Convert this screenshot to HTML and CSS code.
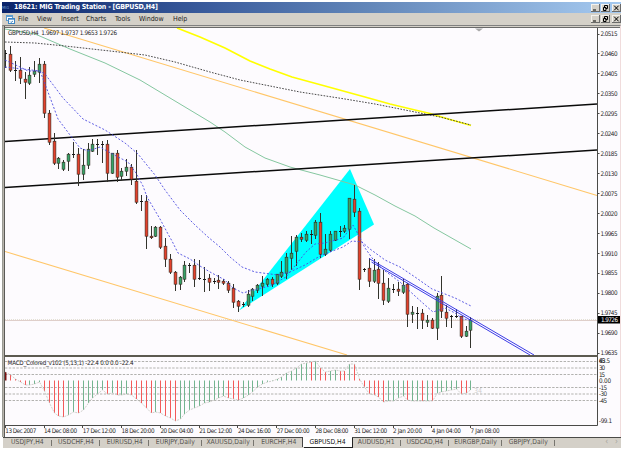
FILE: index.html
```html
<!DOCTYPE html>
<html lang="en">
<head>
<meta charset="UTF-8">
<meta name="viewport" content="width=device-width, initial-scale=1.0">
<title>MIG Trading Station</title>
<link rel="stylesheet" href="styles.css">
</head>
<body>

<div class="window">
  <div class="titlebar">
    <span class="app-mark">MIG</span>
    <span class="title">18621: MIG Trading Station - [GBPUSD,H4]</span>
    <div class="buttons">
      <svg class="btn" viewBox="0 0 9 8"><path d="M2 6h3"/></svg>
      <svg class="btn" viewBox="0 0 9 8"><path d="M3.5 3.5v-2h3v3h-2M2.5 3.5h2.5v3h-2.5z"/></svg>
      <svg class="btn close" viewBox="0 0 9 8"><path d="M2.2 1.7l4.4 4.6M6.6 1.7l-4.4 4.6"/></svg>
    </div>
  </div>

  <div class="menubar">
    <svg class="menu-icon" viewBox="0 0 9 9">
      <rect x=".5" y=".5" width="6" height="5" fill="#fff" stroke="#5b9bd0"/>
      <path d="M1 1.5h5" stroke="#5b9bd0"/>
      <rect x="2.5" y="3.5" width="6" height="5" fill="#fff" stroke="#3f86c4"/>
      <path d="M3 4.2h5M4 6.5l1 1 2-1.5" stroke="#3f86c4" fill="none"/>
    </svg>
    <span class="menu file">File</span>
    <span class="menu view">View</span>
    <span class="menu insert">Insert</span>
    <span class="menu charts">Charts</span>
    <span class="menu tools">Tools</span>
    <span class="menu win">Window</span>
    <span class="menu help">Help</span>
    <div class="buttons">
      <svg class="btn" viewBox="0 0 9 8"><path d="M2 6h3"/></svg>
      <svg class="btn" viewBox="0 0 9 8"><path d="M3.5 3.5v-2h3v3h-2M2.5 3.5h2.5v3h-2.5z"/></svg>
      <svg class="btn close" viewBox="0 0 9 8"><path d="M2.2 1.7l4.4 4.6M6.6 1.7l-4.4 4.6"/></svg>
    </div>
  </div>

  <div class="workspace">
    <!-- price pane -->
    <svg class="pane price" viewBox="5 28 616 329">
      <path d="M475 28.500h8l-4 3z" fill="#a8a8a8"/>
      <path class="price-line" d="M5 320.500H597"/>
      <path class="price-dots" d="M5 319.500H597"/>
      <polygon points="350,169 374,224.500 239,310.500" fill="#00ffff"/>

      <path class="orange" d="M44 28L597 195.500"/>
      <path class="orange" d="M5 251.500L347 355"/>
      <polyline class="green" points="5,29 35,34 70,49 105,63 140,80 210,122 225,132 245,147 265,158 290,167 320,175 355,185 375,195 395,206 415,216 434,228 471,249"/>
      <polyline class="yellow" points="177,28 200,37 225,48 250,61 270,69 292,77 325,86 365,97 390,104 415,110 430,113.500 450,119.500 471,125.500"/>
      <polyline class="slow" points="5,42 35,43 65,46 110,51 145,55 175,62 210,72 240,80 270,86 300,92 345,99 375,104 410,111 440,117 471,125"/>
      <path class="trend" d="M5 141.500L597 104"/>
      <path class="trend" d="M5 187.500L597 150"/>

      <g id="candles"></g>

      <polyline class="ma" points="5,60 20,67 28,71 40,71 45,84 51,100 58,119 70,135 80,148 88,151 100,147 107,151 118,157 128,162 136,173 143,186 147,197 160,219 168,234 172,241 178,253 190,259 200,266 210,272 225,280 233,288 243,293 253,290 270,286 286,277 298,262 306,252 315,244 325,243 343,238 353,225 358,234 365,248 375,262 385,271 400,282 415,296 425,305 433,312 445,308 455,313 463,319 471,320"/>
      <polyline class="ma" points="5,67 40,71 45,74 63,98 83,119 105,130 125,143 138,154 155,175 165,190 180,210 195,225 208,237 220,247 230,257 242,267 255,272 278,275 290,272 305,265 320,256 330,252 343,247 352,241 362,242 370,249 385,260 400,267 415,277 432,289 445,294 455,298 471,306"/>
      <path class="channel" d="M369 258.500L534 355M371.500 262L530 355"/>

      <text class="label" x="8" y="35" textLength="109">GBPUSD,H4&#160; 1.9697 1.9737 1.9653 1.9726</text>
      <path class="axis" d="M597.500 28V355"/>
      <path class="divider" d="M5 356H598"/>
      <g id="priceScale"></g>
      <rect x="598" y="316" width="22" height="7.500" fill="#000"/>
      <text class="label current" x="601" y="322" textLength="17">1.9726</text>
    </svg>

    <!-- indicator pane -->
    <svg class="pane macd" viewBox="5 357 616 80">
      <path class="grid" d="M5 361.500H597M5 368H597M5 374.500H597M5 387.500H597M5 394H597M5 400.500H597"/>
      <g id="bars"></g>
      <polyline id="signal" class="signal" points=""/>
      <text class="label" x="7.500" y="364.500" textLength="126">MACD_Colored_v102 (5,13,1) -22.4 0.0 0.0 -22.4</text>
      <text class="label faint" x="474" y="393" textLength="8">34</text>
      <path class="axis" d="M597.500 357V425.500"/>
      <path class="axis" d="M5 425.500H597.500"/>
      <g id="macdScale"></g>
      <g id="timeScale"></g>
    </svg>
  </div>

  <div class="tabs">
    <span class="tab">USDJPY,H4</span>
    <span class="tab">USDCHF,H4</span>
    <span class="tab">EURUSD,H4</span>
    <span class="tab daily">EURJPY,Daily</span>
    <span class="tab daily">XAUUSD,Daily</span>
    <span class="tab last">EURCHF,H4</span>
    <span class="tab active">GBPUSD,H4</span>
    <span class="tab">AUDUSD,H1</span>
    <span class="tab">USDCAD,H4</span>
    <span class="tab daily">EURGBP,Daily</span>
    <span class="tab daily">GBPJPY,Daily</span>
    <div class="scroll"><span>‹</span><span>›</span></div>
  </div>
</div>

<script src="chart.js"></script>
</body>
</html>
```
FILE: styles.css
```css
body {
  margin: 0;
  background-color: #fff;
  font-family: "DejaVu Sans Condensed", "DejaVu Sans", sans-serif;
  overflow: hidden;
}
.window {
  width: 619px;
  height: 446px;
  margin: 2px 0 0 2px;
  display: flex;
  flex-direction: column;
}
.titlebar {
  display: flex;
  align-items: center;
  height: 11px;
  flex: none;
  background: linear-gradient(to right, #0a246a, #3d5f9f 35%, #6488ba 60%, #a6caf0);
  color: #fff;
}
.app-mark {
  width: 12px;
  font-size: 4px;
  color: #6f9ad0;
}
.title {
  font-size: 7px;
  font-weight: bold;
  line-height: 11px;
  white-space: nowrap;
  letter-spacing: -0.19px;
}
.menubar {
  display: flex;
  align-items: center;
  height: 12px;
  flex: none;
  padding-left: 4px;
  background-color: #d4d0c8;
}
.menu-icon {
  width: 9px;
  height: 9px;
  margin-right: 3px;
}
.menu {
  font-size: 7px;
  letter-spacing: -0.05px;
  color: #1c1c1c;
  white-space: nowrap;
}
.file { width: 19px; }
.view { width: 24px; }
.insert { width: 25px; }
.charts { width: 29px; }
.tools { width: 24px; }
.win { width: 34px; }
.buttons {
  display: flex;
  margin-left: auto;
  gap: 1px;
}
.btn {
  width: 9px;
  height: 8px;
  background-color: #d4d0c8;
  box-shadow: inset -1px -1px 0 #6a6a6a, inset 1px 1px 0 #f4f2ee;
  fill: none;
  stroke: #000;
}
.close {
  margin-left: 1px;
}
.workspace {
  flex: none;
  height: 412px;
  border-top: 1px solid #808080;
  border-left: 1px solid #9a9a94;
  border-right: 1px solid #f0dcdc;
  box-shadow: inset 1px 0 0 #b8b4ac, inset 2px 0 0 #5a5a56, inset 0 1px 0 #d4d0c8, inset 0 2px 0 #6a6a6a;
  padding: 2px 0 0 2px;
  box-sizing: border-box;
  background-color: #fdfbfe;
}
.pane {
  display: block;
  width: 616px;
}
.price {
  height: 329px;
}
.macd {
  height: 80px;
}
.pane path, .pane polyline {
  fill: none;
}
.pane path[fill] {
  fill: #a8a8a8;
}
.label {
  font-size: 6.3px;
  fill: #262626;
}
.current {
  fill: #fff;
}
.faint {
  font-size: 7px;
  fill: #cfcfcf;
}
.axis {
  stroke: #4a4a48;
}
.divider {
  stroke: #5c5a50;
  stroke-width: 2;
}
.price-line {
  stroke: #dfcfca;
}
.price-dots {
  stroke: #e4e0d6;
  stroke-dasharray: 1 1;
}
.orange {
  stroke: #ffc668;
  stroke-width: 1.1;
}
.green {
  stroke: #85c7a0;
}
.yellow {
  stroke: #ffff00;
  stroke-width: 1.7;
}
.slow {
  stroke: #333;
  stroke-width: 0.9;
  stroke-dasharray: 1.6 1.4;
}
.trend {
  stroke: #0a0a0a;
  stroke-width: 1.5;
}
.ma {
  stroke: #4c4ce0;
  stroke-width: 0.9;
  stroke-dasharray: 2 1.8;
}
.channel {
  stroke: #3c3ce6;
  stroke-width: 1;
}
.wick {
  stroke: #33332c;
}
.body {
  stroke: #33281e;
  stroke-width: 0.6;
}
.up {
  fill: #36a368;
}
.down {
  fill: #e4412c;
}
.doji {
  fill: #1a1a1a;
}
.bar {
  stroke-width: 1;
}
.bar-up {
  stroke: #74b490;
}
.bar-down {
  stroke: #f35a5a;
}
.bar-first {
  stroke: #7a1010;
  stroke-width: 2;
}
.signal {
  stroke: #c4c4be;
  stroke-width: 0.8;
  stroke-dasharray: 2 1;
}
.grid {
  stroke: #a9a9a6;
  stroke-width: 0.9;
  stroke-dasharray: 2.4 1.4;
}
.tabs {
  display: flex;
  flex: none;
  height: 10px;
  margin-left: 1px;
  border-top: 1px solid #4a4a48;
  background-color: #d4d0c8;
}
.tab {
  position: relative;
  width: 48.7px;
  height: 10px;
  flex: none;
  font-size: 6.8px;
  line-height: 9.5px;
  text-align: center;
  color: #55534e;
  white-space: nowrap;
}
.daily {
  width: 52.7px;
}
.tab::after {
  content: "";
  position: absolute;
  right: 0;
  top: 2px;
  width: 1px;
  height: 6px;
  background-color: #77756f;
}
.last::after, .active::after {
  display: none;
}
.active {
  height: 9px;
  margin-top: -1px;
  padding-top: 1px;
  background-color: #fff;
  color: #111;
  box-shadow: 1px 1px 0 #222, -1px 0 0 #444;
}
.scroll {
  display: flex;
  gap: 7px;
  margin-left: auto;
  margin-right: 3px;
  font-size: 8px;
  line-height: 8px;
  color: #a5a29a;
}
```
FILE: chart.js
```js
var NS = "http://www.w3.org/2000/svg";
var STEP = 4.847;
var START = 5.65;

// [high, body top, body bottom, low, u = up, d = down, x = doji]
var candles = [
  [50,53,54,67,"x"],[46,54,70,71,"d"],[61,70,70,80,"x"],[57,70,78,83,"d"],[72,79,82,98,"d"],
  [67,75,83,84,"u"],[61,71,74,76,"u"],[58,64,72,82,"u"],[61,64,113,117,"d"],[110,113,142,144,"d"],
  [133,141,163,164,"d"],[157,158,163,168,"u"],[160,162,169,170,"u"],[153,154,161,170,"u"],[142,154,154,157,"x"],
  [148,154,174,185,"d"],[149,165,174,179,"u"],[143,149,165,168,"u"],[139,144,151,151,"u"],[139,144,144,154,"x"],
  [141,144,144,162,"x"],[140,144,173,181,"d"],[153,153,173,173,"u"],[150,153,177,181,"d"],[168,171,176,180,"u"],
  [159,167,171,175,"u"],[164,167,179,184,"d"],[150,181,202,203,"d"],[195,201,201,210,"x"],[195,201,236,248,"d"],
  [226,236,237,238,"d"],[226,227,236,236,"u"],[226,227,247,248,"d"],[238,246,259,266,"d"],[254,259,272,273,"d"],
  [271,272,284,290,"d"],[276,277,284,289,"u"],[261,265,279,281,"u"],[263,265,265,272,"x"],[259,265,279,286,"d"],
  [260,278,278,279,"x"],[267,279,279,291,"x"],[274,278,282,290,"d"],[278,281,281,283,"x"],[275,280,282,288,"d"],
  [279,281,283,284,"d"],[281,283,290,292,"d"],[284,288,302,307,"d"],[300,301,306,311,"d"],[302,304,304,306,"x"],
  [290,294,305,306,"u"],[288,289,296,300,"u"],[284,285,290,292,"u"],[276,283,286,295,"u"],[278,279,284,286,"u"],
  [277,279,284,286,"d"],[274,274,283,284,"u"],[261,272,276,277,"u"],[253,257,273,278,"u"],[236,253,258,269,"u"],
  [235,237,251,265,"u"],[233,237,239,241,"d"],[231,234,240,241,"u"],[230,234,234,243,"x"],[220,222,235,238,"u"],
  [213,222,254,257,"d"],[234,249,254,255,"u"],[231,234,250,251,"u"],[231,231,240,240,"u"],[226,231,231,236,"x"],
  [225,228,231,232,"u"],[198,198,229,238,"u"],[185,199,212,216,"d"],[208,211,279,289,"d"],[268,269,269,271,"x"],
  [258,268,281,286,"d"],[259,270,281,282,"u"],[262,269,283,298,"d"],[270,283,300,304,"d"],[278,288,301,302,"u"],
  [284,289,289,292,"x"],[282,289,291,295,"d"],[279,285,292,293,"u"],[283,284,314,326,"d"],[306,312,314,322,"u"],
  [307,313,313,328,"x"],[309,313,320,328,"d"],[315,320,322,326,"u"],[318,320,328,328,"d"],[293,296,328,339,"u"],
  [276,295,311,317,"d"],[305,312,318,326,"d"],[315,316,316,327,"x"],[309,316,316,317,"x"],[316,316,336,337,"d"],
  [326,331,336,336,"u"],[317,320,330,347,"u"]
];

// end point of each histogram bar, zero line is at 380.5
var macd = [
  372,375,379,382,385,385,384,382,391,403,413,416,417,415,412,413,410,403,398,394,
  390,394,393,395,395,394,395,399,403,408,413,412,413,416,418,421,419,414,410,408,
  406,403,402,400,398,396,398,399,400,398,395,392,387,384,382,381,379,377,373,371,
  368,364,363,362,361,368,372,371,370,371,371,364,364,379,387,394,395,397,402,401,
  401,398,396,400,401,401,401,401,401,393,392,391,390,389,394,393,390
];
var red = [1,2,3,4,8,9,10,11,12,15,21,23,26,27,28,29,30,32,33,34,35,46,47,48,63,65,66,69,70,72,73,74,75,76,77,78,83,86,88,94,95];

function add(parent, name, attrs, text) {
  var el = document.createElementNS(NS, name);
  for (var key in attrs) {
    el.setAttribute(key, attrs[key]);
  }
  if (text) el.textContent = text;
  document.getElementById(parent).appendChild(el);
}

function xAt(i) {
  return Math.floor(START + i * STEP) + 0.5;
}

candles.forEach(function(c, i) {
  var x = xAt(i);
  var type = c[4] === "u" ? "up" : c[4] === "d" ? "down" : "doji";
  add("candles", "path", { "class": "wick", d: "M" + x + " " + c[0] + "V" + (c[3] + 1) });
  if (type === "doji") {
    add("candles", "rect", { "class": "doji", x: x - 1.5, y: c[1], width: 3, height: 1 });
  } else {
    add("candles", "rect", { "class": "body " + type, x: x - 1.4, y: c[1] + 0.2, width: 2.8, height: Math.max(c[2] - c[1], 1.5) });
  }
});

macd.forEach(function(y, i) {
  var x = xAt(i);
  var cls = i === 0 ? "bar-first" : red.indexOf(i) >= 0 ? "bar-down" : "bar-up";
  add("bars", "path", { "class": "bar " + cls, d: "M" + x + " 380.5V" + y });
});
document.getElementById("signal").setAttribute("points", macd.map(function(y, i) {
  return xAt(i) + "," + y;
}).join(" "));

// price scale
for (var i = 0; i < 17; i++) {
  var y = 34 + i * 19.94;
  add("priceScale", "path", { "class": "axis", d: "M597 " + (Math.floor(y) + 0.5) + "h2.5" });
  add("priceScale", "text", { "class": "label", x: 600.5, y: y + 2.2, textLength: 17 }, (2.0515 - i * 0.0055).toFixed(4));
}

[["63.5", 361, 11], ["45", 361, 6], ["30", 368, 6], ["15", 374.5, 6], ["0.00", 380.5, 12],
 ["-15", 387.5, 8], ["-30", 394, 8], ["-45", 400.5, 8], ["-99.1", 421, 13]].forEach(function(s) {
  add("macdScale", "text", { "class": "label", x: 599, y: s[1] + 2, textLength: s[2] }, s[0]);
});

["13 Dec 2007", "14 Dec 08:00", "17 Dec 12:00", "18 Dec 20:00", "20 Dec 04:00", "21 Dec 12:00", "24 Dec 16:00",
 "27 Dec 00:00", "28 Dec 08:00", "31 Dec 12:00", "2 Jan 20:00", "4 Jan 04:00", "7 Jan 08:00"].forEach(function(s, i) {
  var x = 5.3 + i * 38.77;
  add("timeScale", "path", { "class": "axis", d: "M" + (Math.floor(x) + 0.5) + " 425v3" });
  add("timeScale", "text", { "class": "label", x: x, y: 432.8, textLength: i === 0 ? 31 : i > 9 ? 29 : 33 }, s);
});
```
